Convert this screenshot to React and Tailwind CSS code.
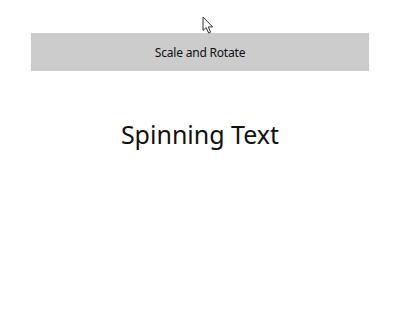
export default function App() {
  return (
    <div className="relative w-[400px] h-[318px] bg-white" style={{ fontFamily: '"Noto Sans", "Open Sans", sans-serif' }}>
      <div className="pt-[33px] px-[31px]">
        <div className="h-[38px] bg-[#cccccc] flex items-center justify-center pt-[2px] text-[12px] tracking-[-0.2px] text-[#111]">
          Scale and Rotate
        </div>
      </div>
      <div className="mt-[47px] flex justify-center text-[25px] leading-[32px] text-[#111]">
        Spinning Text
      </div>
      <svg className="absolute left-[202px] top-[16px]" width="14" height="20" viewBox="0 0 14 20">
        <path d="M1 1 L1 14.5 L4.2 11.6 L6.6 17 L8.6 16.1 L6.3 10.9 L10.6 10.9 Z" fill="white" stroke="#333" strokeWidth="1" strokeLinejoin="miter" />
      </svg>
    </div>
  );
}
